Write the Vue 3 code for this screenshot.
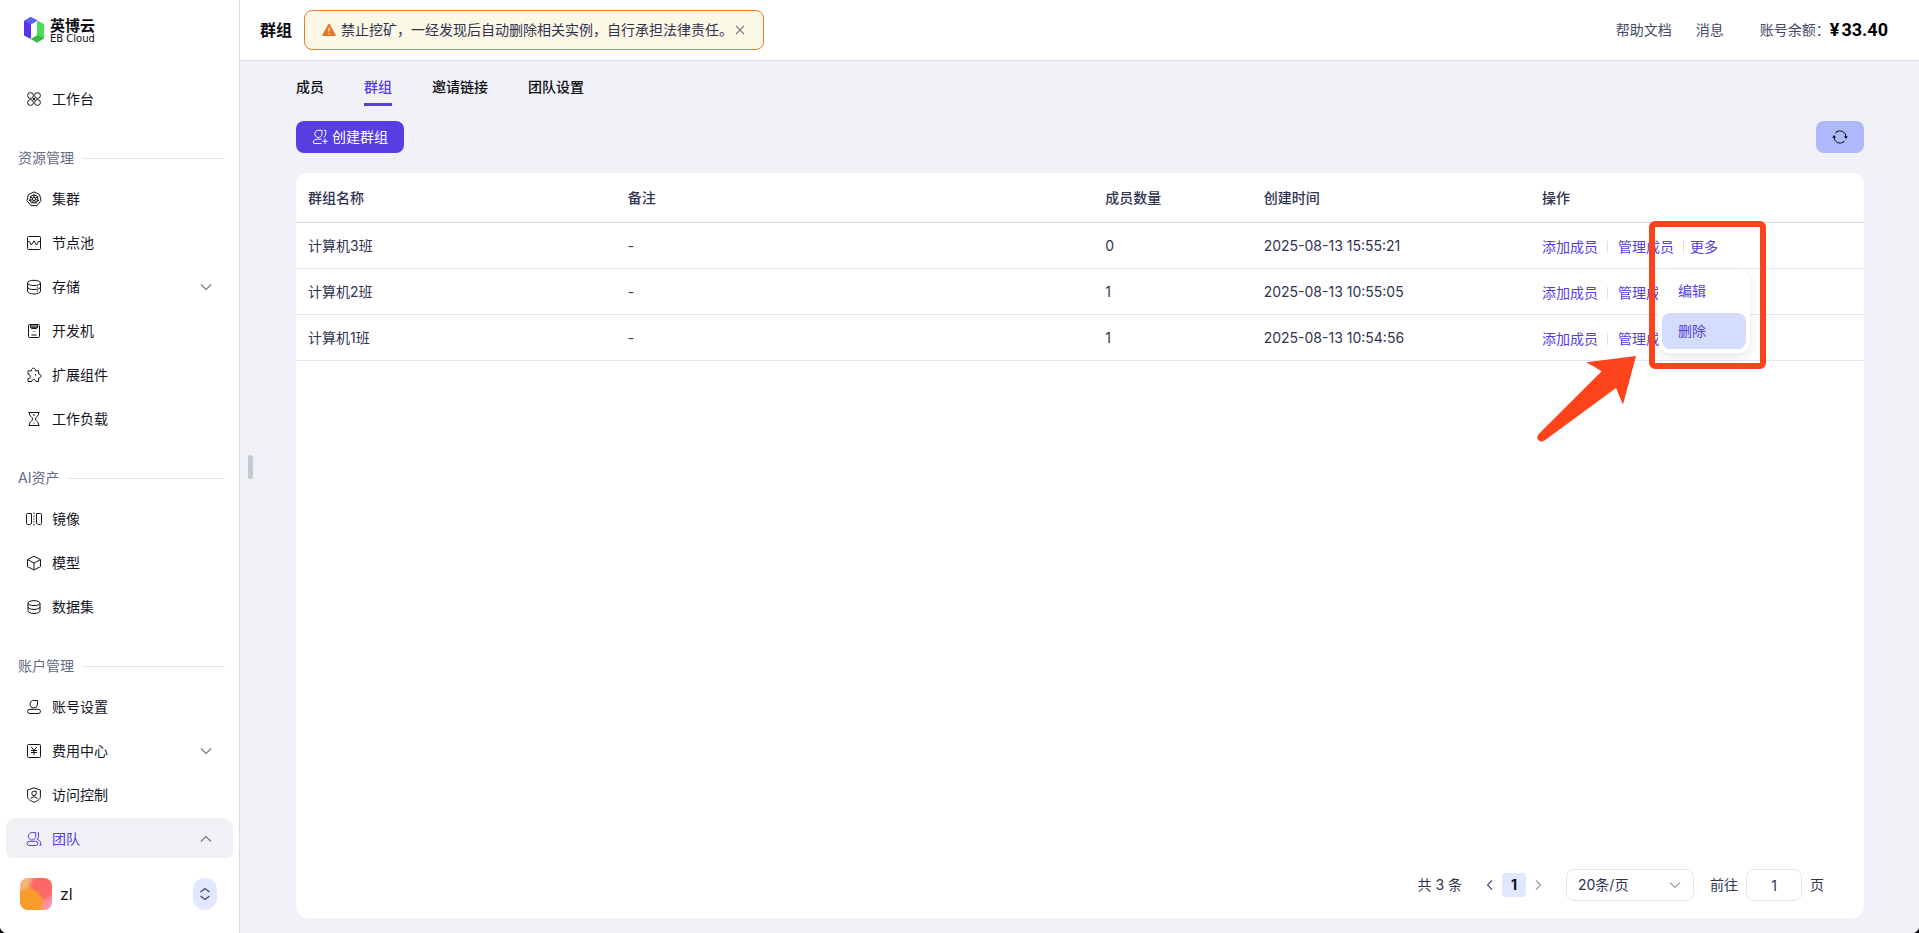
<script setup>
import { ref } from 'vue'

const icons = {
  apps: ['M6.7 6.7C8 8 8 8 9.3 9.3M9.3 6.7C8 8 8 8 6.7 9.3', 'M4.5 1.6a2.9 2.9 0 1 0 0 5.8a2.9 2.9 0 1 0 0-5.8', 'M11.5 1.6a2.9 2.9 0 1 0 0 5.8a2.9 2.9 0 1 0 0-5.8', 'M4.5 8.6a2.9 2.9 0 1 0 0 5.8a2.9 2.9 0 1 0 0-5.8', 'M11.5 8.6a2.9 2.9 0 1 0 0 5.8a2.9 2.9 0 1 0 0-5.8'],
  cluster: ['M8 .9L13.6 3.6L15 9.6L11.1 14.6H4.9L1 9.6L2.4 3.6Z', 'M8 4a4 4 0 1 0 0 8a4 4 0 1 0 0-8', 'M8 6.4a1.6 1.6 0 1 0 0 3.2a1.6 1.6 0 1 0 0-3.2', 'M8 2.8V6.4M3.7 5.2L6.7 7.4M12.3 5.2L9.3 7.4M3 9.6L6.4 8.6M13 9.6L9.6 8.6M5.8 12.7L7.3 9.6M10.2 12.7L8.7 9.6'],
  pool: ['M2.5 1.5H13.5Q14.5 1.5 14.5 2.5V13.5Q14.5 14.5 13.5 14.5H2.5Q1.5 14.5 1.5 13.5V2.5Q1.5 1.5 2.5 1.5Z', 'M1.5 6.5H3.4L5.4 10L8 5.8L10.6 10L12.4 6.5H14.5'],
  storage: ['M1.5 4C1.5 .4 14.5 .4 14.5 4C14.5 7.4 1.5 7.4 1.5 4Z', 'M1.5 4V12C1.5 16 14.5 16 14.5 12V4', 'M1.5 8C1.5 11.4 14.5 11.4 14.5 8', 'M10.8 8.2H12M10.8 12H12'],
  dev: ['M3.5 1.5H12.5Q13.5 1.5 13.5 2.5V13.5Q13.5 14.5 12.5 14.5H3.5Q2.5 14.5 2.5 13.5V2.5Q2.5 1.5 3.5 1.5Z', 'M4.5 1.8V4.5L5.5 5.5H10.5L11.5 4.5V1.8M4.8 3H11.2M4.8 4.3H11.2', 'M7.5 8.5H8.5M5.5 12H10.5'],
  plugin: ['M2.6 3.8H5.6C5 .3 10 .3 9.4 3.8H12.6V7C15.8 7 15.8 11 12.6 11V14.5H9.8C9.6 11.8 6 11.8 5.8 14.5H2V11.6C5.2 11.4 5.2 7.4 2 7.2V4.4Q2 3.8 2.6 3.8Z', 'M9.5 7V8.6'],
  load: ['M2.5 1.5H13.5M2.5 14.5H13.5', 'M3.2 1.5C3.2 5.5 6.6 6 6.6 8C6.6 10 3.2 10.5 3.2 14.5', 'M12.8 1.5C12.8 5.5 9.4 6 9.4 8C9.4 10 12.8 10.5 12.8 14.5', 'M7 4H9M8 11.5V12.5'],
  mirror: ['M5.5 2.5H1.5Q.5 2.5 .5 3.5V12.5Q.5 13.5 1.5 13.5H3.5L5.5 12.5Z', 'M10.5 2.5H14.5Q15.5 2.5 15.5 3.5V12.5Q15.5 13.5 14.5 13.5H12.5L10.5 12.5Z', 'M8 1.5V3M8 4.5V6M8 7.3V8.7M8 10V11.5M8 13V14.5'],
  cube: ['M8 1.2L14.5 4.6V11.6L8 15L1.5 11.6V4.6Z', 'M1.5 4.6L8 8L14.5 4.6M8 8V15'],
  dataset: ['M2 4.2C2 .8 14 .8 14 4.2C14 7.4 2 7.4 2 4.2Z', 'M2 4.2V11.8C2 15.4 14 15.4 14 11.8V4.2', 'M2 8C2 11.2 14 11.2 14 8'],
  user: ['M11.5 1.5H8.2A3.7 3.7 0 1 0 11.5 5.2Z', 'M4 10.3H12Q14.5 10.3 14.5 12.4T12 14.5H4Q1.5 14.5 1.5 12.4T4 10.3Z'],
  cost: ['M2.5 1.5H13.5Q14.5 1.5 14.5 2.5V13.5Q14.5 14.5 13.5 14.5H2.5Q1.5 14.5 1.5 13.5V2.5Q1.5 1.5 2.5 1.5Z', 'M5.3 4L8 7.3L10.7 4M5 7.5H11M5 9.5H11M8 7.3V12'],
  shield: ['M8 .9L14.4 3V9.8C14.4 12.5 11.2 13.7 8 15.3C4.8 13.7 1.6 12.5 1.6 9.8V3Z', 'M10.2 4.2H8A2.2 2.2 0 1 0 10.2 6.4Z', 'M4.8 11.8C5 9.3 11 9.3 11.2 11.8'],
  team: ['M9.7 1.6H6.5A3.7 3.7 0 1 0 9.7 5.2Z', 'M3.5 10.3H9.5Q12 10.3 12 12.4T9.5 14.5H3.5Q1 14.5 1 12.4T3.5 10.3Z', 'M11.8 1.6H12.5V5Q12.5 7.2 11.2 8.5Q15.2 9.5 14.8 14.3H13.4']
}

const groups = [
  { title: '', items: [{ label: '工作台', icon: 'apps' }] },
  {
    title: '资源管理',
    items: [
      { label: '集群', icon: 'cluster' },
      { label: '节点池', icon: 'pool' },
      { label: '存储', icon: 'storage', fold: 'down' },
      { label: '开发机', icon: 'dev' },
      { label: '扩展组件', icon: 'plugin' },
      { label: '工作负载', icon: 'load' }
    ]
  },
  {
    title: 'AI资产',
    items: [
      { label: '镜像', icon: 'mirror' },
      { label: '模型', icon: 'cube' },
      { label: '数据集', icon: 'dataset' }
    ]
  },
  {
    title: '账户管理',
    items: [
      { label: '账号设置', icon: 'user' },
      { label: '费用中心', icon: 'cost', fold: 'down' },
      { label: '访问控制', icon: 'shield' },
      { label: '团队', icon: 'team', fold: 'up', active: true }
    ]
  }
]

const tabs = ['成员', '群组', '邀请链接', '团队设置']
const activeTab = ref('群组')
const rows = [
  { name: '计算机3班', note: '-', count: 0, created: '2025-08-13 15:55:21' },
  { name: '计算机2班', note: '-', count: 1, created: '2025-08-13 10:55:05' },
  { name: '计算机1班', note: '-', count: 1, created: '2025-08-13 10:54:56' }
]
const openRow = ref(0)
const noticeShown = ref(true)
const pageSize = ref('20条/页')
const jump = ref('1')
</script>

<template>
  <div class="app" lang="zh-CN">
    <aside class="sidebar">
      <a class="logo" href="#">
        <svg width="20" height="26" viewBox="0 0 20 26" aria-hidden="true">
          <path d="M0 4L6.5 0L13.5 3.5L7 7V22L0 18.5Z" fill="#5a34ea" />
          <path d="M0 4L6.5 0L13.5 3.5L7 7.5Z" fill="#5a62ee" />
          <path d="M13 3.5L20 7V21.5L13 25.5L7 22L13 18.5Z" fill="#4cdc5c" />
          <path d="M7 22L13.5 18L20 21.5L13 25.5Z" fill="#3cb944" />
        </svg>
        <span class="logo-words">
          <span class="logo-cn">英博云</span>
          <span class="logo-en">EB Cloud</span>
        </span>
      </a>

      <nav class="nav">
        <section v-for="g in groups" :key="g.title" class="group">
          <h2 v-if="g.title" class="group-title">{{ g.title }}</h2>
          <a v-for="it in g.items" :key="it.label" href="#" class="item" :class="{ active: it.active }">
            <svg class="line-icon" width="16" height="16" viewBox="0 0 16 16" aria-hidden="true">
              <path v-for="d in icons[it.icon]" :key="d" :d="d" />
            </svg>
            <span>{{ it.label }}</span>
            <svg v-if="it.fold" class="fold" width="12" height="12" viewBox="0 0 12 12" aria-hidden="true">
              <path :d="it.fold === 'up' ? 'M1 8.5L6 3.5L11 8.5' : 'M1 3.5L6 8.5L11 3.5'" />
            </svg>
          </a>
        </section>
      </nav>

      <div class="account">
        <span class="avatar"></span>
        <span class="account-name">zl</span>
        <button class="switcher" type="button" aria-label="切换账号">
          <svg width="12" height="14" viewBox="0 0 12 14" aria-hidden="true">
            <path d="M1.5 5L6 1.5L10.5 5M1.5 9L6 12.5L10.5 9" />
          </svg>
        </button>
      </div>
    </aside>

    <div class="page">
      <header class="topbar">
        <h1>群组</h1>
        <div v-if="noticeShown" class="notice">
          <svg width="14" height="14" viewBox="0 0 14 14" aria-hidden="true">
            <path d="M6.3 1.2Q7 .2 7.7 1.2L13.8 12Q14 13 13 13H1Q0 13 .2 12Z" fill="#e6762b" />
            <path d="M7 4.8V8.6M7 10V11.2" stroke="#fbf6e4" stroke-width="1.2" fill="none" />
          </svg>
          <span>禁止挖矿，一经发现后自动删除相关实例，自行承担法律责任。</span>
          <button type="button" aria-label="关闭" @click="noticeShown = false">
            <svg width="10" height="10" viewBox="0 0 10 10" aria-hidden="true">
              <path d="M1 1L9 9M9 1L1 9" stroke="#777b90" stroke-width="1.1" />
            </svg>
          </button>
        </div>
        <div class="top-links">
          <a href="#">帮助文档</a>
          <a href="#">消息</a>
          <span class="balance">账号余额：<strong><span>¥</span>33.40</strong></span>
        </div>
      </header>

      <main class="content">
        <span class="grip"></span>
        <div class="tabs" role="tablist">
          <button
            v-for="t in tabs"
            :key="t"
            type="button"
            role="tab"
            :aria-selected="t === activeTab"
            :class="{ on: t === activeTab }"
            @click="activeTab = t"
          >{{ t }}</button>
        </div>

        <div class="toolbar">
          <button class="create" type="button">
            <svg width="16" height="16" viewBox="0 0 16 16" aria-hidden="true">
              <path d="M10 1.3H7A3.6 3.6 0 1 0 10 4.9ZM12 1.3H13.8V4.5Q13.8 7 11.8 8.3M9.5 14.5H2.4Q1 14.5 1.3 12.9Q2 10.2 5 10.2H9.5M13 9.5V15M10.3 12.2H15.7" />
            </svg>
            创建群组
          </button>
          <button class="refresh" type="button" aria-label="刷新">
            <svg width="16" height="16" viewBox="0 0 16 16" aria-hidden="true">
              <path d="M4.2 3.2A6 6 0 0 1 14 8M11.8 12.8A6 6 0 0 1 2 8M12.6 11.8L11 13.4M3.4 4.2L5 2.6" />
              <path class="solid" d="M12 7.2H15.8L13.9 10ZM.2 8.8H4L2.1 6Z" />
            </svg>
          </button>
        </div>

        <section class="card">
          <table>
            <colgroup>
              <col class="c-name" /><col class="c-note" /><col class="c-count" /><col class="c-time" /><col />
            </colgroup>
            <thead>
              <tr><th>群组名称</th><th>备注</th><th>成员数量</th><th>创建时间</th><th>操作</th></tr>
            </thead>
            <tbody>
              <tr v-for="(r, i) in rows" :key="r.name">
                <td>{{ r.name }}</td>
                <td>{{ r.note }}</td>
                <td>{{ r.count }}</td>
                <td>{{ r.created }}</td>
                <td class="ops" :class="{ open: openRow === i }">
                  <div class="op-list">
                    <a href="#">添加成员</a>
                    <i></i>
                    <a href="#">管理成员</a>
                    <i></i>
                    <button type="button" @click="openRow = i">更多</button>
                  </div>
                  <template v-if="openRow === i">
                    <div class="menu">
                      <button type="button">编辑</button>
                      <button type="button" class="hover">删除</button>
                    </div>
                    <span class="mark"></span>
                    <svg class="arrow" width="110" height="92" viewBox="0 0 110 92" aria-hidden="true">
                      <path d="M106 1L56.5 7.3L71.7 16.3L8.5 79.3C5 83.5 9.5 88.5 14.5 85.5L86 33L93 49.5Z" />
                    </svg>
                  </template>
                </td>
              </tr>
            </tbody>
          </table>

          <footer class="pager">
            <span class="total">共 3 条</span>
            <button class="step" type="button" aria-label="上一页">
              <svg width="8" height="12" viewBox="0 0 8 12" aria-hidden="true"><path d="M6 1.5L1.5 6L6 10.5" /></svg>
            </button>
            <button class="current" type="button">1</button>
            <button class="step next" type="button" aria-label="下一页">
              <svg width="8" height="12" viewBox="0 0 8 12" aria-hidden="true"><path d="M2 1.5L6.5 6L2 10.5" /></svg>
            </button>
            <span class="size">
              <select v-model="pageSize" aria-label="每页条数">
                <option>20条/页</option>
                <option>50条/页</option>
              </select>
              <svg width="12" height="12" viewBox="0 0 12 12" aria-hidden="true"><path d="M1 3.5L6 8.5L11 3.5" /></svg>
            </span>
            <label class="jump">前往<input v-model="jump" type="text" />页</label>
          </footer>
        </section>
      </main>
    </div>
  </div>
</template>

<style>
body {
  margin: 0;
}
</style>

<style scoped>
.app {
  position: relative;
  display: flex;
  height: 100vh;
  overflow: hidden;
  background: #f1f2f8;
  color: #2f3350;
  font: 14px/20px Inter, "Noto Sans CJK SC", sans-serif;
}
.app::before,
.app::after {
  content: "";
  position: absolute;
  bottom: 0;
  z-index: 5;
  width: 8px;
  height: 8px;
}
.app::before {
  left: 0;
  background: radial-gradient(circle at 100% 0, transparent 8px, #000 9px);
}
.app::after {
  right: 0;
  background: radial-gradient(circle at 0 0, transparent 8px, #000 9px);
}
*,
*::before,
*::after {
  box-sizing: border-box;
}
button,
input,
select {
  font: inherit;
  color: inherit;
  margin: 0;
  padding: 0;
  border: 0;
  background: none;
}
button {
  cursor: pointer;
}
a {
  color: inherit;
  text-decoration: none;
}
svg {
  flex: none;
  display: block;
}

.sidebar {
  flex: none;
  width: 240px;
  display: flex;
  flex-direction: column;
  background: #fff;
  border-right: 1px solid #d8dae4;
}
.logo {
  display: flex;
  gap: 6px;
  height: 78px;
  padding: 17px 0 0 24px;
  color: #0b0b14;
}
.logo-words {
  display: flex;
  flex-direction: column;
}
.logo-cn {
  font-size: 15px;
  line-height: 18px;
  font-weight: 700;
}
.logo-en {
  font: 10px/8px "DejaVu Sans", sans-serif;
}
.nav {
  flex: 1;
  min-height: 0;
  overflow: hidden;
  padding: 0 6px;
}
.group {
  display: flex;
  flex-direction: column;
  gap: 2px;
  margin-bottom: 28px;
}
.group-title {
  display: flex;
  align-items: center;
  gap: 8px;
  margin: 0 8px 8px 12px;
  font-size: 14px;
  line-height: 20px;
  font-weight: 400;
  color: #666b85;
}
.group-title::after {
  content: "";
  flex: 1;
  height: 1px;
  background: #e0e6e8;
}
.item {
  display: flex;
  align-items: center;
  gap: 10px;
  height: 42px;
  padding: 0 21px 0 20px;
  border-radius: 10px;
  color: #14141f;
}
.item.active {
  background: #f0f1f5;
  color: #563ee0;
}
.line-icon {
  fill: none;
  stroke: currentColor;
}
.fold {
  margin-left: auto;
  fill: none;
  stroke: #777985;
  stroke-width: 1.2;
}
.account {
  display: flex;
  align-items: center;
  gap: 8px;
  height: 75px;
  padding: 0 22px 3px 20px;
}
.avatar {
  width: 32px;
  height: 32px;
  border-radius: 8px;
  background:
    radial-gradient(circle at 25% 78%, #f79b29 0 36%, transparent 48%),
    radial-gradient(circle at 70% 28%, #fd6866 0 30%, transparent 48%),
    linear-gradient(135deg, #f4b57c 20%, #ee9a86 50%, #fa92a4 85%);
}
.account-name {
  font-size: 16px;
  color: #14141f;
}
.switcher {
  display: grid;
  place-items: center;
  width: 24px;
  height: 32px;
  margin-left: auto;
  border-radius: 12px;
  background: #e0e7ff;
}
.switcher svg {
  fill: none;
  stroke: #444860;
  stroke-width: 1.2;
}

.page {
  flex: 1;
  min-width: 0;
  display: flex;
  flex-direction: column;
}
.topbar {
  flex: none;
  display: flex;
  align-items: center;
  height: 61px;
  padding: 0 31px 0 20px;
  background: #fff;
  border-bottom: 1px solid #d8dae4;
}
h1 {
  margin: 0 12px 0 0;
  font-size: 16px;
  font-weight: 700;
  color: #0b0b14;
}
.notice {
  display: flex;
  align-items: center;
  gap: 5px;
  height: 40px;
  padding: 0 18px 0 17px;
  border: 1px solid #e87d2c;
  border-radius: 8px;
  background: #fcf8e6;
}
.notice button {
  margin-left: -3px;
}
.top-links {
  display: flex;
  align-items: center;
  gap: 24px;
  margin-left: auto;
  color: #454a66;
}
.balance {
  display: flex;
  align-items: center;
  margin-left: 12px;
}
.balance strong {
  display: flex;
  gap: 2px;
  font: 700 18px/24px Roboto, sans-serif;
  color: #000;
}

.content {
  position: relative;
  flex: 1;
  min-height: 0;
  display: flex;
  flex-direction: column;
  padding: 16px 55px 15px 56px;
}
.grip {
  position: absolute;
  left: 8px;
  top: 394px;
  width: 5px;
  height: 24px;
  border-radius: 3px;
  background: #c3cad4;
}
.tabs {
  display: flex;
  gap: 40px;
}
.tabs button {
  padding-bottom: 6px;
  border-bottom: 3px solid transparent;
  font-weight: 500;
  color: #0b0b14;
}
.tabs .on {
  color: #563ee0;
  border-bottom-color: #563ee0;
}
.toolbar {
  display: flex;
  justify-content: space-between;
  margin: 15px 0 20px;
}
.create {
  display: flex;
  align-items: center;
  gap: 4px;
  height: 32px;
  padding: 0 16px;
  border-radius: 8px;
  background: #563ee0;
  color: #fff;
}
.create svg,
.refresh svg {
  fill: none;
  stroke: currentColor;
}
.refresh {
  display: grid;
  place-items: center;
  width: 48px;
  height: 32px;
  border-radius: 8px;
  background: #adb9fa;
  color: #0b0b14;
}
.refresh .solid {
  fill: currentColor;
  stroke: none;
}
.card {
  flex: 1;
  min-height: 0;
  display: flex;
  flex-direction: column;
  justify-content: space-between;
  border-radius: 12px;
  background: #fff;
}
table {
  width: 100%;
  table-layout: fixed;
  border-collapse: separate;
  border-spacing: 0;
}
.c-name {
  width: 20.4%;
}
.c-note {
  width: 30.45%;
}
.c-count {
  width: 10.1%;
}
.c-time {
  width: 17.75%;
}
th,
td {
  height: 46px;
  padding: 0 12px;
  text-align: left;
  border-bottom: 1px solid #e4e6f1;
}
th {
  height: 50px;
  font-weight: 500;
  border-bottom-color: #d0d9e0;
}
.open {
  position: relative;
  z-index: 2;
}
.op-list {
  display: flex;
  align-items: center;
  padding-top: 2px;
  color: #563ee0;
}
.op-list i {
  width: 1px;
  height: 12px;
  margin: 0 10px 0 9px;
  background: #dcdcf2;
}
.op-list i:last-of-type {
  margin-right: 6px;
}
.menu {
  position: absolute;
  left: 128px;
  top: 46px;
  display: flex;
  flex-direction: column;
  gap: 4px;
  width: 92px;
  padding: 4px;
  border-radius: 12px;
  background: #fff;
  box-shadow: 0 4px 12px rgba(30, 30, 60, 0.1);
}
.menu button {
  height: 36px;
  padding: 0 16px;
  border-radius: 8px;
  text-align: left;
  color: #563ee0;
}
.menu .hover {
  background: #d5ddfd;
}
.mark {
  position: absolute;
  left: 119px;
  top: -2px;
  width: 117px;
  height: 148px;
  border: 6px solid #fc431b;
  border-radius: 6px;
}
.arrow {
  position: absolute;
  left: 0;
  top: 132px;
  fill: #fc431b;
}

.pager {
  display: flex;
  align-items: center;
  padding: 0 40px 17px 0;
  justify-content: flex-end;
}
.step {
  display: grid;
  place-items: center;
  width: 8px;
  height: 24px;
}
.step svg,
.size svg {
  fill: none;
  stroke: #45485f;
  stroke-width: 1.1;
}
.next svg,
.size svg {
  stroke: #9a9cad;
}
.total {
  margin-right: 24px;
}
.current {
  width: 24px;
  height: 24px;
  margin: 0 8px;
  border-radius: 4px;
  background: #e0e7ff;
  font-weight: 700;
  color: #0b0b14;
}
.size {
  position: relative;
  margin: 0 16px 0 24px;
}
.size select {
  appearance: none;
  width: 128px;
  height: 32px;
  padding: 0 11px;
  border: 1px solid #e3e7ea;
  border-radius: 8px;
  background: #fff;
  display: block;
}
.size svg {
  position: absolute;
  right: 13px;
  top: 10px;
  pointer-events: none;
}
.jump {
  display: flex;
  align-items: center;
  gap: 8px;
}
.jump input {
  width: 56px;
  height: 32px;
  border: 1px solid #e3e7ea;
  border-radius: 8px;
  text-align: center;
}
</style>
